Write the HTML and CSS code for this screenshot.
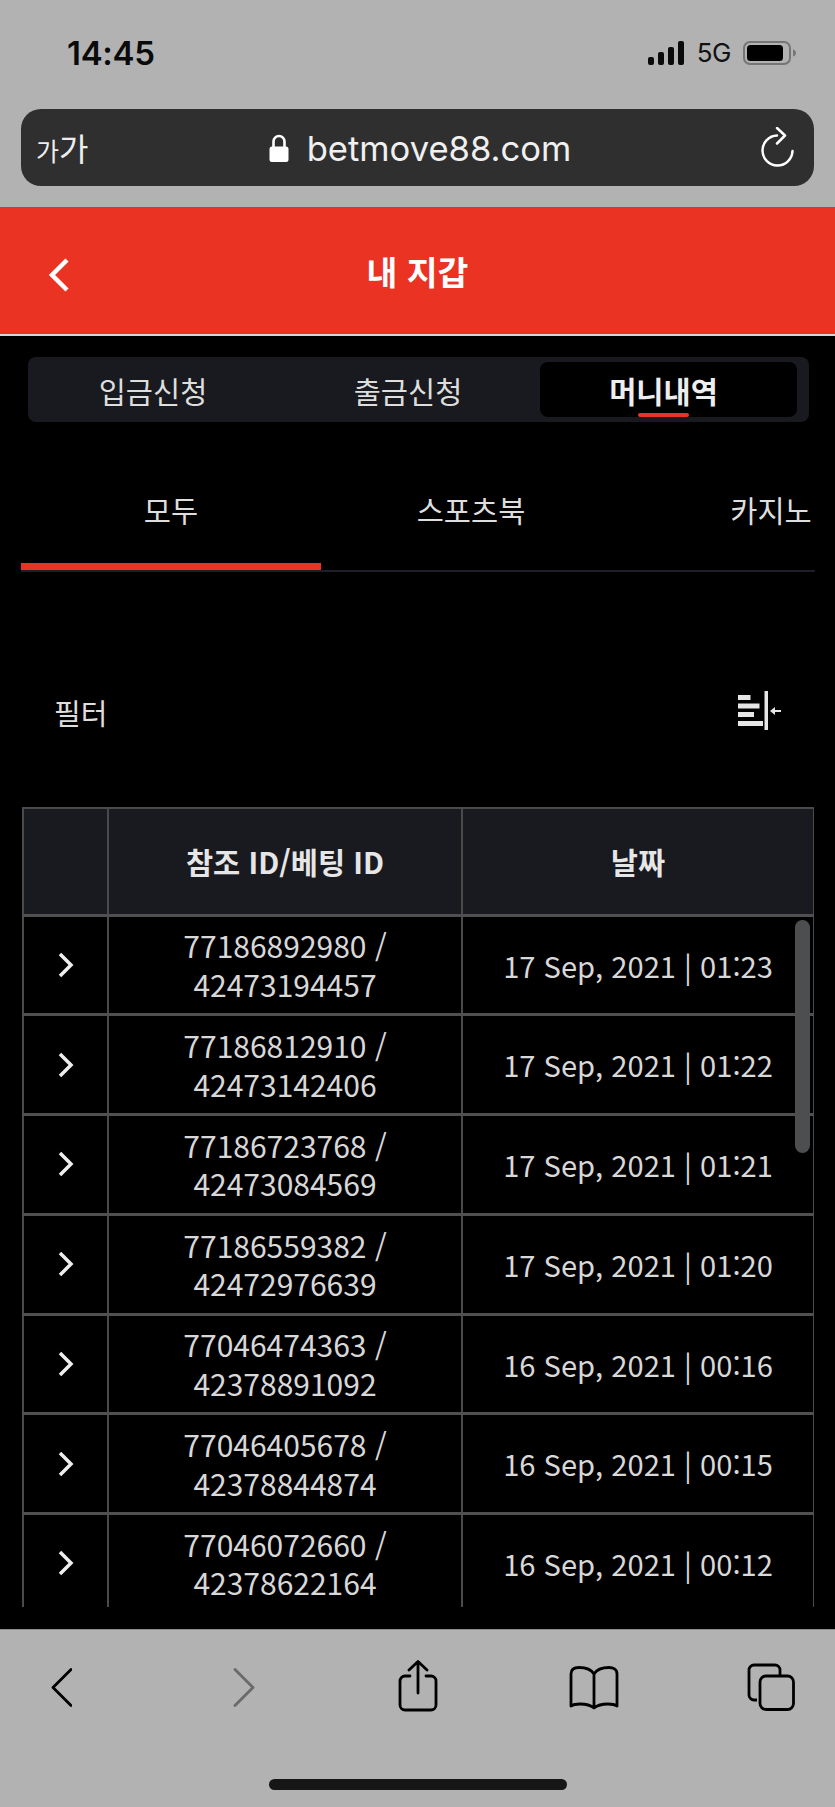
FILE: index.html
```
<!DOCTYPE html>
<html lang="ko">
<head>
<meta charset="utf-8">
<title>내 지갑</title>
<link rel="stylesheet" href="styles.css">
</head>
<body>
<div class="phone">
  <header class="chrome-top">
    <div class="status">
      <span class="clock">14:45</span>
      <div class="status-right">
        <svg class="signal" viewBox="0 0 36 24" width="36" height="24"><rect x="0" y="16" width="6" height="8" rx="2"/><rect x="10" y="11" width="6" height="13" rx="2"/><rect x="20" y="6" width="6" height="18" rx="2"/><rect x="30" y="0" width="6" height="24" rx="2"/></svg>
        <span class="net">5G</span>
        <svg class="battery" viewBox="0 0 53 24" width="53" height="24"><rect x="1" y="1" width="46" height="22" rx="6" fill="none" stroke="#757575" stroke-width="2"/><rect x="4" y="4" width="36" height="16" rx="3.500" fill="#000"/><path d="M50 8.500c2 .6 3 2 3 3.500s-1 2.900-3 3.500z" fill="#757575"/></svg>
      </div>
    </div>
    <div class="urlbar">
      <span class="aa"><small>가</small>가</span>
      <div class="address">
        <svg class="lock" viewBox="0 0 20 28" width="20" height="28"><path d="M4.500 14V7.500a5.500 5.500 0 0 1 11 0V14" fill="none" stroke="#fff" stroke-width="2.600"/><rect x="0.500" y="12.500" width="19" height="15.500" rx="2.500" fill="#fff"/></svg>
        <span class="domain">betmove88.com</span>
      </div>
      <svg class="reload" viewBox="0 0 34 40" width="34" height="40"><path d="M16 8.500A15 15 0 1 0 31.500 24" fill="none" stroke="#fff" stroke-width="2.500" stroke-linecap="round"/><path d="M16 1l8 7.500-8 8" fill="none" stroke="#fff" stroke-width="2.500" stroke-linecap="round" stroke-linejoin="round"/></svg>
    </div>
  </header>

  <div class="appbar">
    <svg class="appbar-back" viewBox="0 0 22 36" width="22" height="36"><path d="M19 3L4 18l15 15" fill="none" stroke="#fff" stroke-width="4.500"/></svg>
    <h1 class="appbar-title">내 지갑</h1>
  </div>

  <main class="content">
    <nav class="segments">
      <a class="segment">입금신청</a>
      <a class="segment">출금신청</a>
      <a class="segment segment-active">머니내역</a>
    </nav>

    <div class="categories">
      <a class="category category-active">모두</a>
      <a class="category">스포츠북</a>
      <a class="category">카지노</a>
    </div>

    <div class="filter-row">
      <span class="filter-label">필터</span>
      <svg class="filter-icon" viewBox="0 0 43 39" width="43" height="39"><g fill="#e6e6e6"><rect x="0" y="4" width="12.500" height="5"/><rect x="0" y="12.500" width="21.500" height="5"/><rect x="0" y="21" width="16" height="5"/><rect x="0" y="30" width="25" height="5"/><rect x="26.500" y="0" width="3.500" height="39"/><path d="M32 20l5-4v3h6v2h-6v3z"/></g></svg>
    </div>

    <div class="table-wrap">
      <table class="history">
        <colgroup><col class="col-toggle"><col class="col-id"><col class="col-date"></colgroup>
        <thead>
          <tr><th></th><th>참조 ID/베팅 ID</th><th>날짜</th></tr>
        </thead>
        <tbody>
          <tr><td class="toggle"><svg viewBox="0 0 16 26" width="16" height="26"><path d="M2 2l11 11L2 24" fill="none" stroke="#eee" stroke-width="3.500"/></svg></td><td class="ref">77186892980 /<br>42473194457</td><td class="date">17 Sep, 2021 | 01:23</td></tr>
          <tr><td class="toggle"><svg viewBox="0 0 16 26" width="16" height="26"><path d="M2 2l11 11L2 24" fill="none" stroke="#eee" stroke-width="3.500"/></svg></td><td class="ref">77186812910 /<br>42473142406</td><td class="date">17 Sep, 2021 | 01:22</td></tr>
          <tr><td class="toggle"><svg viewBox="0 0 16 26" width="16" height="26"><path d="M2 2l11 11L2 24" fill="none" stroke="#eee" stroke-width="3.500"/></svg></td><td class="ref">77186723768 /<br>42473084569</td><td class="date">17 Sep, 2021 | 01:21</td></tr>
          <tr><td class="toggle"><svg viewBox="0 0 16 26" width="16" height="26"><path d="M2 2l11 11L2 24" fill="none" stroke="#eee" stroke-width="3.500"/></svg></td><td class="ref">77186559382 /<br>42472976639</td><td class="date">17 Sep, 2021 | 01:20</td></tr>
          <tr><td class="toggle"><svg viewBox="0 0 16 26" width="16" height="26"><path d="M2 2l11 11L2 24" fill="none" stroke="#eee" stroke-width="3.500"/></svg></td><td class="ref">77046474363 /<br>42378891092</td><td class="date">16 Sep, 2021 | 00:16</td></tr>
          <tr><td class="toggle"><svg viewBox="0 0 16 26" width="16" height="26"><path d="M2 2l11 11L2 24" fill="none" stroke="#eee" stroke-width="3.500"/></svg></td><td class="ref">77046405678 /<br>42378844874</td><td class="date">16 Sep, 2021 | 00:15</td></tr>
          <tr><td class="toggle"><svg viewBox="0 0 16 26" width="16" height="26"><path d="M2 2l11 11L2 24" fill="none" stroke="#eee" stroke-width="3.500"/></svg></td><td class="ref">77046072660 /<br>42378622164</td><td class="date">16 Sep, 2021 | 00:12</td></tr>
        </tbody>
      </table>
      <div class="scroll-thumb"></div>
    </div>
  </main>

  <footer class="chrome-bottom">
    <div class="toolbar">
      <svg class="tool tool-back" viewBox="0 0 21 39" width="21" height="39"><path d="M20 1.500L2 19.500l18 18" fill="none" stroke="#000" stroke-width="2.800" stroke-linecap="round" stroke-linejoin="round"/></svg>
      <svg class="tool tool-forward" viewBox="0 0 22 39" width="22" height="39"><path d="M2 1.500l18 18-18 18" fill="none" stroke="#6a6a6a" stroke-width="2.800" stroke-linecap="round" stroke-linejoin="round"/></svg>
      <svg class="tool tool-share" viewBox="0 0 40 52" width="40" height="52"><g fill="none" stroke="#000" stroke-width="2.800" stroke-linecap="round" stroke-linejoin="round"><path d="M12 16H7a5 5 0 0 0-5 5v24a5 5 0 0 0 5 5h26a5 5 0 0 0 5-5V21a5 5 0 0 0-5-5h-5"/><path d="M20 33V2M11 10l9-8.500L29 10"/></g></svg>
      <svg class="tool tool-book" viewBox="0 0 50 44" width="50" height="44"><path d="M25 8C22 3 16 1.500 10 1.500 6 1.500 2 3 2 8v32c0 0 3-2 9-2 6 0 11 1.500 14 4 3-2.500 8-4 14-4 6 0 9 2 9 2V8c0-5-4-6.500-8-6.500C34 1.500 28 3 25 8zM25 8v33" fill="none" stroke="#000" stroke-width="2.800" stroke-linejoin="round"/></svg>
      <svg class="tool tool-tabs" viewBox="0 0 48 48" width="48" height="48"><g fill="none" stroke="#000" stroke-width="2.800"><path d="M10 37H7a5 5 0 0 1-5-5V7a5 5 0 0 1 5-5h21a5 5 0 0 1 5 5v6"/><rect x="13" y="13" width="33.500" height="33.500" rx="6"/></g></svg>
    </div>
    <div class="home-indicator"></div>
  </footer>
</div>
</body>
</html>
```
FILE: styles.css
```
* { box-sizing: border-box; }

html, body {
  margin: 0;
  padding: 0;
  background: #000;
}

.phone {
  width: 835px;
  height: 1807px;
  display: flex;
  flex-direction: column;
  overflow: hidden;
  font-family: "Noto Sans CJK KR", "Noto Sans", sans-serif;
  color: #dedede;
}

/* Browser chrome, top */
.chrome-top {
  height: 207px;
  background: #b2b2b2;
  padding: 0 21px;
  flex: none;
}

.status {
  height: 109px;
  padding: 35px 18px 0 46px;
  display: flex;
  justify-content: space-between;
  align-items: flex-start;
}

.clock {
  font: 600 33px/36px Inter, "Liberation Sans", sans-serif;
  letter-spacing: -0.3px;
  color: #0a0a0a;
}

.status-right {
  display: flex;
  align-items: center;
  height: 36px;
}

.signal { fill: #0a0a0a; margin-right: 13px; }

.net {
  font: 400 26px/36px Inter, "Liberation Sans", sans-serif;
  letter-spacing: -0.5px;
  color: #111;
  margin-right: 12px;
}

.urlbar {
  height: 77px;
  background: #2f2f2f;
  border-radius: 20px;
  position: relative;
  display: flex;
  align-items: center;
  justify-content: center;
}

.aa {
  position: absolute;
  left: 15px;
  top: 18px;
  font-size: 32px;
  line-height: 40px;
  color: #eee;
}

.aa small { font-size: 25px; }

.address {
  display: flex;
  align-items: center;
  gap: 18px;
  margin-left: 5px;
}

.domain {
  font: 400 34.600px/44px Inter, "Liberation Sans", sans-serif;
  color: #f0f0f0;
}

.reload { position: absolute; right: 19px; top: 18px; }

/* Red page header */
.appbar {
  height: 129px;
  background: #ea3323;
  border-bottom: 2px solid #d6d6d6;
  flex: none;
  position: relative;
  display: flex;
  align-items: center;
  justify-content: center;
}

.appbar-back { position: absolute; left: 48px; top: 50px; }

.appbar-title {
  margin: 0;
  font-size: 33.500px;
  font-weight: 700;
  line-height: 44px;
  color: #fff;
}

/* Page body */
.content {
  flex: 1;
  min-height: 0;
  background: #000;
  padding: 21px 21px 0 22px;
  overflow: hidden;
}

.segments {
  margin: 0 5px 0 6px;
  height: 65px;
  background: #191a1f;
  border-radius: 8px;
  padding: 5px 12px 5px 0;
  display: grid;
  grid-template-columns: 250px 260px 259px;
}

.segment {
  display: flex;
  align-items: center;
  justify-content: center;
  font-size: 29.500px;
  color: #dedede;
}

.segment-active {
  position: relative;
  margin-left: 2px;
  padding-right: 10px;
  background: #000;
  border-radius: 8px;
  font-weight: 700;
  color: #eee;
}

.segment-active::after {
  content: "";
  position: absolute;
  left: 98px;
  bottom: 0;
  width: 51px;
  height: 4px;
  border-radius: 2px;
  background: #ea3323;
}

.categories {
  margin: 0 -1px;
  display: flex;
  height: 150px;
  border-bottom: 2px solid #1d1e28;
  overflow: hidden;
}

.category {
  flex: none;
  width: 300px;
  height: 148px;
  padding-top: 64px;
  text-align: center;
  font-size: 29.500px;
  line-height: 46px;
  color: #dedede;
}

.category-active { box-shadow: inset 0 -7px 0 #ea3323; }

.filter-row {
  height: 235px;
  padding: 42px 33px 0 32px;
  display: flex;
  justify-content: space-between;
  align-items: center;
}

.filter-label {
  font-size: 29px;
  line-height: 40px;
  padding-top: 2px;
}

.table-wrap {
  position: relative;
  height: 800px;
  overflow: hidden;
}

.history {
  width: 791px;
  table-layout: fixed;
  border-collapse: collapse;
  line-height: 38.500px;
}

.col-toggle { width: 85px; }
.col-id { width: 354px; }
.col-date { width: 352px; }

.history th,
.history td {
  border: 2px solid #4a4a4a;
  padding: 0;
  text-align: center;
  vertical-align: middle;
}

.history thead tr { height: 107px; }

.history th {
  background: #191a1f;
  font-size: 29.500px;
  font-weight: 700;
  color: #e6e6e6;
}

.history tbody tr { height: 99.750px; }

.history td {
  color: #d8d8d8;
  border-top: 3px solid #505050;
  border-bottom: 3px solid #505050;
}

.history .ref { font-size: 30px; }

.history .date { font-size: 29.100px; }

.toggle svg { display: block; margin: 0 auto; }

.scroll-thumb {
  position: absolute;
  top: 113px;
  left: 773px;
  width: 15px;
  height: 233px;
  border-radius: 8px;
  background: #4d4e50;
}

/* Browser chrome, bottom */
.chrome-bottom {
  height: 178px;
  flex: none;
  background: #b2b2b2;
  border-top: 1px solid #8e8e8e;
  display: flex;
  flex-direction: column;
  align-items: center;
}

.toolbar {
  width: 100%;
  height: 149px;
  position: relative;
}

.tool { position: absolute; }
.tool-back { left: 51px; top: 38px; }
.tool-forward { left: 233px; top: 38px; }
.tool-share { left: 398px; top: 30px; }
.tool-book { left: 569px; top: 36px; }
.tool-tabs { left: 747px; top: 33px; }

.home-indicator {
  width: 298px;
  height: 11px;
  border-radius: 6px;
  background: #161616;
}
```
